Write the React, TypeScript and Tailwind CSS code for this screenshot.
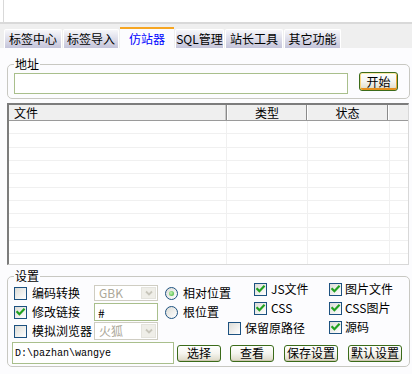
import type { ReactNode } from 'react';

function CheckBox({ checked = false }: { checked?: boolean }) {
  return (
    <span className="relative block w-[13px] h-[13px] shrink-0 border border-[#1c5180] bg-linear-to-br from-[#dcdcd7] to-white">
      {checked && (
        <svg className="absolute left-0 top-0" width="11" height="11" viewBox="0 0 11 11">
          <path d="M2.3 5 L4.4 7.2 L8.8 2.6" stroke="#21a121" strokeWidth="2.2" fill="none" strokeLinecap="square" />
        </svg>
      )}
    </span>
  );
}

function Radio({ on = false }: { on?: boolean }) {
  return (
    <span className="flex items-center justify-center w-[13px] h-[13px] shrink-0 rounded-full border border-[#1c5180] bg-linear-to-br from-[#dcdcd7] to-white">
      {on && <span className="w-[5px] h-[5px] rounded-full bg-[radial-gradient(circle_at_40%_40%,#c6f5b5,#2fa82a)]" />}
    </span>
  );
}

function XpButton({ children, className = '', primary }: { children: ReactNode; className?: string; primary?: boolean }) {
  return (
    <button
      type="button"
      className={[
        'flex items-center justify-center border border-[#3b6b1a] rounded-[3px] bg-linear-to-b from-white via-[#f5f4ee] to-[#dcd8c6] text-[12px] leading-none text-black',
        primary
          ? 'shadow-[inset_0_1px_0_0_#fce9a8,inset_1px_0_0_0_#f8d57f,inset_-1px_0_0_0_#eca93a,inset_0_-2px_0_0_#e5901c]'
          : 'shadow-[inset_0_-1px_0_0_#cdc7b0]',
        className,
      ].join(' ')}
    >
      {children}
    </button>
  );
}

function XpSelect({ value, className = '' }: { value: string; className?: string }) {
  return (
    <div className={`flex items-stretch w-[64px] border border-[#cfcdc2] bg-white ${className}`}>
      <span className="flex-1 flex items-center pl-[4px] text-[#aca899] text-[12px] leading-none">{value}</span>
      <span className="w-[15px] my-[1px] mr-[1px] bg-[#efeee8] border border-[#e4e3dd] flex items-center justify-center">
        <svg width="8" height="6" viewBox="0 0 8 6">
          <path d="M1 1.5 L4 4.5 L7 1.5" stroke="#c8c6bb" strokeWidth="1.8" fill="none" />
        </svg>
      </span>
    </div>
  );
}

const tabs = [
  { label: '标签中心', w: 'w-[58px]' },
  { label: '标签导入', w: 'w-[56px]' },
  { label: '仿站器', w: 'w-[54px]', active: true },
  { label: 'SQL管理', w: 'w-[49px]' },
  { label: '站长工具', w: 'w-[58px]' },
  { label: '其它功能', w: 'w-[57px]' },
];

const rows = Array.from({ length: 11 });

export default function App() {
  return (
    <div className="w-[412px] h-[374px] overflow-hidden bg-[#fcfcfe] text-[12px] leading-[12px] text-black font-['Noto_Sans_CJK_SC',sans-serif]">
      {/* panel above the tabs */}
      <div className="h-[24px] bg-white border-b-2 border-[#d9d9d9]">
        <div className="ml-[3px] h-full border-l border-[#d9d9d9]" />
      </div>

      {/* tab strip */}
      <div className="h-[24px] bg-[#efefef] flex items-end gap-[1px] pl-[4px]">
        {tabs.map((t) =>
          t.active ? (
            <div
              key={t.label}
              className={`${t.w} h-[21px] bg-[#fcfcfe] border-t-2 border-[#f6a623] flex items-center justify-center text-[#0000ff] text-[12px]`}
            >
              {t.label}
            </div>
          ) : (
            <div
              key={t.label}
              className={`${t.w} h-[19px] border border-b-0 border-white rounded-t-[2px] bg-linear-to-b from-[#f7f7fa] to-[#c4c4da] flex items-center justify-center text-[12px]`}
            >
              {t.label}
            </div>
          )
        )}
      </div>

      {/* 地址 */}
      <fieldset className="mt-[10px] ml-[7px] mr-[2px] border border-[#c8c8c2] rounded-[5px] pl-[6px] pr-[11px] pt-[3px] pb-[4px]">
        <legend className="px-[1px] leading-[12px]">地址</legend>
        <div className="flex items-start justify-between">
          <input
            className="w-[334px] h-[21px] border border-[#a9bf8c] bg-white outline-none px-[3px] text-[12px]"
            defaultValue=""
          />
          <XpButton primary className="w-[39px] h-[19px] -mt-[1px]">开始</XpButton>
        </div>
      </fieldset>

      {/* 文件列表 */}
      <div className="mt-[4px] ml-[7px] mr-[3px] h-[162px] border-l-2 border-t-2 border-l-[#7c7c7c] border-t-[#7c7c7c] border-r border-b border-r-[#d8d8d8] border-b-[#d8d8d8] bg-white overflow-hidden">
        <div className="flex h-[16px] bg-[#efefef] border-b border-[#9a9a9a]">
          <div className="w-[218px] pl-[5px] flex items-center border-r border-[#8a8a8a] shadow-[inset_-1px_0_0_#c8c8c8]">文件</div>
          <div className="w-[80px] flex items-center justify-center border-r border-[#8a8a8a] border-l border-l-white">类型</div>
          <div className="w-[81px] flex items-center justify-center border-r border-[#8a8a8a] border-l border-l-white">状态</div>
          <div className="flex-1 border-l border-l-white" />
        </div>
        {rows.map((_, i) => (
          <div key={i} className="flex h-[13.33px] border-b border-[#f0f0f0]">
            <div className="w-[218px] border-r border-[#f0f0f0]" />
            <div className="w-[81px] border-r border-[#f0f0f0]" />
            <div className="w-[82px] border-r border-[#f0f0f0]" />
            <div className="flex-1" />
          </div>
        ))}
      </div>

      {/* 设置 */}
      <fieldset className="mt-[5px] ml-[7px] mr-[2px] border border-[#c8c8c2] rounded-[5px] pl-[6px] pr-[6px] pb-[2px]">
        <legend className="px-[1px] leading-[12px]">设置</legend>
        <div className="flex items-start">
          <div className="mt-[2px] flex flex-col gap-[1px] w-[144px]">
            <div className="h-[18px] flex items-center">
              <CheckBox />
              <span className="ml-[5px] w-[62px]">编码转换</span>
              <XpSelect value="GBK" className="h-[16px]" />
            </div>
            <div className="h-[18px] flex items-center">
              <CheckBox checked />
              <span className="ml-[5px] w-[62px]">修改链接</span>
              <input
                className="w-[64px] h-[18px] border border-[#a9bf8c] bg-white outline-none px-[3px] text-[12px]"
                defaultValue="#"
              />
            </div>
            <div className="h-[18px] flex items-center">
              <CheckBox />
              <span className="ml-[5px] w-[62px]">模拟浏览器</span>
              <XpSelect value="火狐" className="h-[18px]" />
            </div>
          </div>

          <div className="mt-[2px] ml-[7px] flex flex-col gap-[1px] w-[89px]">
            <div className="h-[18px] flex items-center gap-[5px]">
              <Radio on />
              <span>相对位置</span>
            </div>
            <div className="h-[18px] flex items-center gap-[5px]">
              <Radio />
              <span>根位置</span>
            </div>
          </div>

          <div className="-mt-[2px] grid grid-cols-[75px_auto] auto-rows-[18px] gap-y-[1px]">
            <div className="flex items-center gap-[4px]">
              <CheckBox checked />
              <span>JS文件</span>
            </div>
            <div className="flex items-center gap-[3px]">
              <CheckBox checked />
              <span>图片文件</span>
            </div>
            <div className="flex items-center gap-[4px]">
              <CheckBox checked />
              <span>CSS</span>
            </div>
            <div className="flex items-center gap-[3px]">
              <CheckBox checked />
              <span>CSS图片</span>
            </div>
            <div className="-ml-[26px] mt-[2px] flex items-center gap-[4px]">
              <CheckBox />
              <span>保留原路径</span>
            </div>
            <div className="flex items-center gap-[3px]">
              <CheckBox checked />
              <span>源码</span>
            </div>
          </div>
        </div>

        <div className="mt-[2px] -ml-[2px] flex items-center">
          <input
            className="w-[162px] h-[22px] border border-[#a9bf8c] bg-white outline-none px-[2px] text-[10px] font-['Liberation_Mono',monospace]"
            defaultValue="D:\pazhan\wangye"
          />
          <XpButton className="ml-[3px] w-[44px] h-[17px]">选择</XpButton>
          <XpButton className="ml-[9px] w-[44px] h-[17px]">查看</XpButton>
          <XpButton className="ml-[10px] w-[54px] h-[17px]">保存设置</XpButton>
          <XpButton className="ml-[10px] w-[54px] h-[17px]">默认设置</XpButton>
        </div>
      </fieldset>
    </div>
  );
}
